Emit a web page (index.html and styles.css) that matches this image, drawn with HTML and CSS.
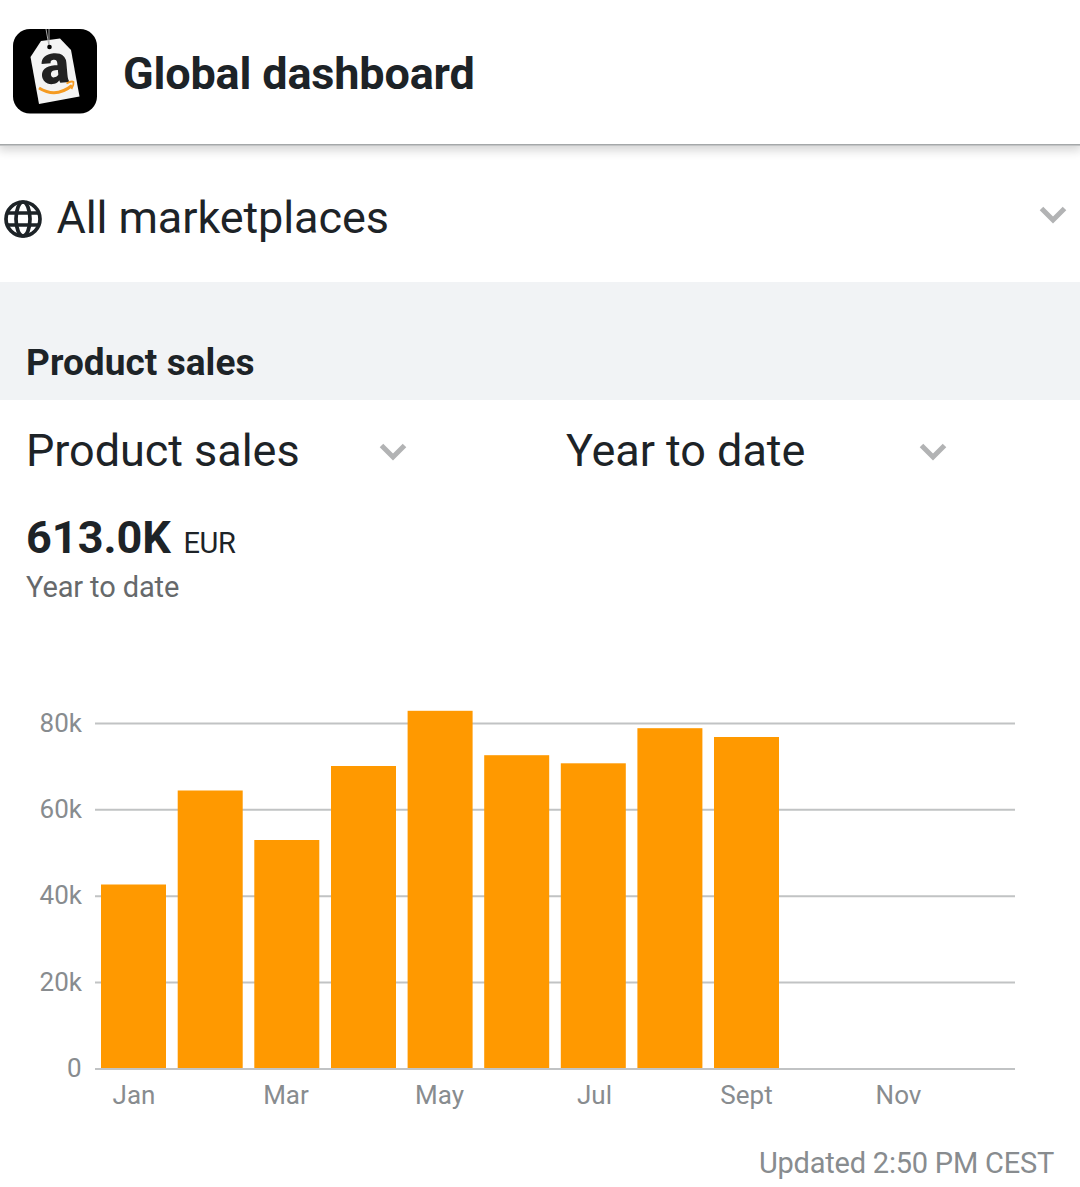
FILE: index.html
```html
<!DOCTYPE html>
<html lang="en">
<head>
<meta charset="utf-8">
<title>Global dashboard</title>
<link rel="stylesheet" href="styles.css">
</head>
<body>
<header class="header">
  <svg class="logo" viewBox="0 0 84 84" aria-hidden="true">
    <rect width="84" height="84.500" rx="17" fill="#000"/>
    <path d="M28 12 47 9.500 58 21 66.500 67.500 26 75 17.500 28Z" fill="#f4f4f4"/>
    <path d="M33 0 36 17M36 0V17" fill="none" stroke="#aaa" stroke-width="1"/>
    <circle cx="36.500" cy="18" r="2.300" fill="#000"/>
    <text class="logo-letter" x="0" y="0" transform="translate(28.500 55.500) rotate(-5) scale(.98 1)">a</text>
    <path d="M26 59Q43 69.500 59 56.500" fill="none" stroke="#f59b22" stroke-width="3"/>
    <path d="M53.500 54.500Q58.500 51.500 60.500 53 61 56 58.500 60" fill="none" stroke="#f59b22" stroke-width="1.800"/>
  </svg>
  <h1 class="title">Global dashboard</h1>
</header>
<main>
  <div class="marketplace">
    <svg class="globe" viewBox="0 0 38 38" aria-hidden="true">
      <circle cx="19" cy="19" r="17"/>
      <ellipse cx="19" cy="19" rx="7" ry="17"/>
      <path d="M4 13H34M4 25H34"/>
    </svg>
    <span class="marketplace-name">All marketplaces</span>
    <svg class="chevron" viewBox="0 0 28 18" aria-hidden="true"><path d="M2.500 2.500 14 14 25.500 2.500"/></svg>
  </div>
  <h2 class="section">Product sales</h2>
  <div class="filters">
    <div class="filter"><span class="metric">Product sales</span><svg class="chevron" viewBox="0 0 28 18" aria-hidden="true"><path d="M2.500 2.500 14 14 25.500 2.500"/></svg></div>
    <div class="filter"><span class="period">Year to date</span><svg class="chevron" viewBox="0 0 28 18" aria-hidden="true"><path d="M2.500 2.500 14 14 25.500 2.500"/></svg></div>
  </div>
  <div class="total"><strong class="amount">613.0K</strong><span class="currency">EUR</span></div>
  <p class="caption">Year to date</p>
  <svg class="chart" viewBox="0 690 1080 430" role="img" aria-label="Monthly product sales">
    <path class="grid" d="M95 723.500H1015M95 809.800H1015M95 896.200H1015M95 982.500H1015"/>
    <g class="bars">
      <rect x="101" y="884.500" width="65" height="184.500"/>
      <rect x="177.700" y="790.500" width="65" height="278.500"/>
      <rect x="254.300" y="840" width="65" height="229"/>
      <rect x="331" y="766" width="65" height="303"/>
      <rect x="407.600" y="710.800" width="65" height="358.200"/>
      <rect x="484.200" y="755.200" width="65" height="313.800"/>
      <rect x="560.800" y="763.300" width="65" height="305.700"/>
      <rect x="637.400" y="728.200" width="65" height="340.800"/>
      <rect x="714" y="737" width="65" height="332"/>
    </g>
    <path class="grid" d="M95 1069H1015"/>
    <g class="y-labels">
      <text x="82" y="731.500">80k</text><text x="82" y="817.500">60k</text><text x="82" y="904">40k</text><text x="82" y="990.500">20k</text><text x="81.500" y="1077">0</text>
    </g>
    <g class="x-labels">
      <text x="134" y="1103.500">Jan</text><text x="286" y="1103.500">Mar</text><text x="439.500" y="1103.500">May</text><text x="594.500" y="1103.500">Jul</text><text x="746.500" y="1103.500">Sept</text><text x="898.500" y="1103.500">Nov</text>
    </g>
  </svg>
  <p class="updated">Updated 2:50 PM CEST</p>
</main>
</body>
</html>
```
FILE: styles.css
```css
* { box-sizing: border-box; }
body { margin: 0; background: #fff; color: #1d2327; font-family: Roboto, "Liberation Sans", sans-serif; height: 1187px; overflow: hidden; }
h1, h2, p { margin: 0; }
.header { height: 145px; padding: 29px 13px 0; display: flex; gap: 26px; border-bottom: 1px solid #a5a8a9; box-shadow: 0 1px 0 #c2c4c5, 0 3px 10px 2px rgba(0, 0, 0, .18); clip-path: inset(0 0 -16px 0); }
.logo { width: 84px; height: 84px; overflow: visible; }
.logo-letter { font: 900 56px Roboto, sans-serif; fill: #222; }
.title { font-size: 45px; line-height: 90px; font-weight: 700; letter-spacing: -.17px; }
.marketplace { height: 137px; padding: 0 13px 0 3.5px; display: flex; align-items: center; }
.globe { width: 38px; height: 38px; margin-top: 11px; fill: none; stroke: #1d2327; stroke-width: 3.7; }
.marketplace-name { margin: 8px auto 0 15px; font-size: 45px; letter-spacing: -.1px; }
.chevron { width: 28px; height: 18px; fill: none; stroke: #b2b3b4; stroke-width: 5; }
.marketplace .chevron { margin-top: 2px; }
.section { height: 118px; padding: 59px 26px 0; background: #f1f3f5; font-size: 37px; line-height: 43px; letter-spacing: .05px; }
.filters { height: 102px; padding-left: 26px; display: grid; grid-template-columns: 540px 1fr; align-items: center; }
.filter { width: 381px; display: flex; align-items: center; justify-content: space-between; font-size: 45px; letter-spacing: -.05px; }
.metric, .period { margin-top: -2px; }
.filter .chevron { margin-top: 1px; }
.total { height: 66px; padding: 8px 26px 0; display: flex; align-items: baseline; gap: 12.5px; }
.amount { font-size: 45px; line-height: 56px; }
.currency { font-size: 29px; letter-spacing: -.3px; }
.caption { height: 122px; padding-left: 26px; color: #66696b; font-size: 29px; line-height: 38px; letter-spacing: -.12px; }
.chart { display: block; width: 1080px; height: 430px; }
.grid { fill: none; stroke: #c1c3c4; stroke-width: 2; }
.bars { fill: #ff9900; }
.y-labels, .x-labels { fill: #888c8f; font-size: 26px; }
.y-labels { text-anchor: end; }
.x-labels { text-anchor: middle; }
.updated { padding: 24px 26px 0; text-align: right; color: #888c8f; font-size: 29px; line-height: 38px; letter-spacing: -.22px; }
```
